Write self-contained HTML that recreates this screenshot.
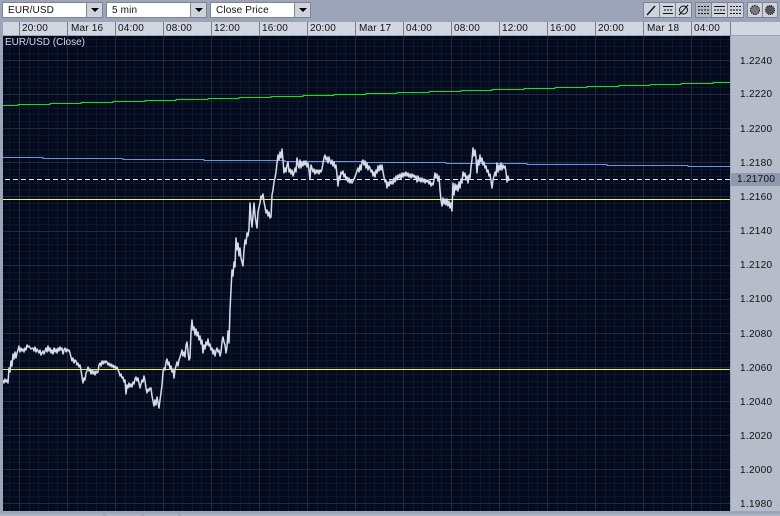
<!DOCTYPE html>
<html><head><meta charset="utf-8"><style>
html,body{margin:0;padding:0}
body{width:780px;height:516px;overflow:hidden;background:#9ca5b8;position:relative;font:10px "Liberation Sans",sans-serif;color:#111}
.a{position:absolute}
.dd{position:absolute;top:2px;height:14px;width:83px;background:#fff;border:1px solid #7d8595;line-height:15px;letter-spacing:.15px}
.dd span{position:absolute;left:5px;top:0;white-space:nowrap}
.bt{position:absolute;top:2px;width:15px;height:14px;background:#cfd3dd;border:1px solid #7d8595}
.bt:after{content:"";position:absolute;left:4px;top:5px;border-left:4px solid transparent;border-right:4px solid transparent;border-top:4px solid #000}
.hd{position:absolute;left:3px;top:22px;width:727px;height:13px;background:#d2d6e0}
.t{position:absolute;top:22px;height:13px;line-height:14px;letter-spacing:.2px;white-space:nowrap}
.s{position:absolute;top:22px;width:1px;height:14px;background:#747c8e}
.y{position:absolute;left:740px;line-height:13px;height:13px;white-space:nowrap;letter-spacing:.3px}
</style></head><body>
<div class="dd" style="left:2px"><span>EUR/USD</span></div><div class="bt" style="left:86px"></div>
<div class="dd" style="left:106px"><span>5 min</span></div><div class="bt" style="left:190px"></div>
<div class="dd" style="left:210px"><span>Close Price</span></div><div class="bt" style="left:294px"></div>

<svg class="a" style="left:0;top:0" width="780" height="20" viewBox="0 0 780 20">
<g fill="#cfd3dd" stroke="#7d8595"><rect x="643.5" y="2.5" width="16" height="15"/><rect x="659.5" y="2.5" width="16" height="15"/><rect x="675.5" y="2.5" width="16" height="15"/><rect x="695.5" y="2.5" width="16" height="15" fill="#b3b8c5"/><rect x="711.5" y="2.5" width="16" height="15"/><rect x="727.5" y="2.5" width="16" height="15"/><rect x="747.5" y="2.5" width="15" height="15"/><rect x="762.5" y="2.5" width="15" height="15"/></g>
<g fill="none" stroke="#111" stroke-width="1"><path d="M647 15L655 6" stroke-width="1.4"/><path d="M663 6.500h10M663 13.500h10" /><path d="M664 10h8" stroke-dasharray="2 1"/><circle cx="683.500" cy="10" r="4"/><path d="M679 15L688 5"/>
<path d="M698 6.500h11M698 13.500h11M698 10h11" stroke-dasharray="2 1"/><path d="M714 6.500h11M714 13.500h11"/><path d="M714 10h11" stroke-dasharray="2 1"/><path d="M730 6.500h11M730 13.500h11M730 10h11" stroke-dasharray="2 1"/></g>
<circle cx="755" cy="10" r="4.500" fill="#777" stroke="#111" stroke-dasharray="1.500 1"/><circle cx="770" cy="10" r="4.500" fill="#555" stroke="#111" stroke-dasharray="1 1"/>
</svg>

<div class="hd"></div>
<div class="a" style="left:731px;top:22px;width:49px;height:13px;background:#d2d6e0"></div>
<div class="s" style="left:19px"></div><div class="s" style="left:67px"></div><div class="s" style="left:115px"></div><div class="s" style="left:163px"></div><div class="s" style="left:211px"></div><div class="s" style="left:259px"></div><div class="s" style="left:307px"></div><div class="s" style="left:355px"></div><div class="s" style="left:403px"></div><div class="s" style="left:451px"></div><div class="s" style="left:499px"></div><div class="s" style="left:547px"></div><div class="s" style="left:595px"></div><div class="s" style="left:643px"></div><div class="s" style="left:691px"></div><div class="s" style="left:730px"></div>
<div class="t" style="left:22px">20:00</div><div class="t" style="left:71px">Mar 16</div><div class="t" style="left:118px">04:00</div><div class="t" style="left:166px">08:00</div><div class="t" style="left:214px">12:00</div><div class="t" style="left:262px">16:00</div><div class="t" style="left:310px">20:00</div><div class="t" style="left:359px">Mar 17</div><div class="t" style="left:406px">04:00</div><div class="t" style="left:454px">08:00</div><div class="t" style="left:502px">12:00</div><div class="t" style="left:550px">16:00</div><div class="t" style="left:598px">20:00</div><div class="t" style="left:647px">Mar 18</div><div class="t" style="left:694px">04:00</div>

<div class="a" style="left:731px;top:36px;width:49px;height:475px;background:#b7bcca"></div>
<div class="y" style="top:55px">1.2240</div><div class="y" style="top:88px">1.2220</div><div class="y" style="top:123px">1.2200</div><div class="y" style="top:157px">1.2180</div><div class="y" style="top:191px">1.2160</div><div class="y" style="top:225px">1.2140</div><div class="y" style="top:259px">1.2120</div><div class="y" style="top:293px">1.2100</div><div class="y" style="top:328px">1.2080</div><div class="y" style="top:362px">1.2060</div><div class="y" style="top:396px">1.2040</div><div class="y" style="top:430px">1.2020</div><div class="y" style="top:464px">1.2000</div><div class="y" style="top:498px">1.1980</div>
<div class="a" style="left:731px;top:173px;width:49px;height:13px;background:#8f9ab1"></div>
<div class="y" style="top:173px;left:737px;">1.21700</div>
<div class="a" style="left:0;top:514px;width:103px;height:2px;background:#aeb4c3"></div>
<div class="a" style="left:106px;top:514px;width:35px;height:2px;background:#aeb4c3"></div>
<div class="a" style="left:144px;top:514px;width:34px;height:2px;background:#aeb4c3"></div>
<div class="a" style="left:181px;top:514px;width:599px;height:2px;background:#aeb4c3"></div>

<svg class="a" style="left:3px;top:36px" width="727" height="475" viewBox="3 36 727 475">
<rect x="3" y="36" width="727" height="475" fill="#050b1f"/>
<g shape-rendering="crispEdges" fill="none">
<path stroke="#0f172b" d="M9.500 36V511M29.500 36V511M38.500 36V511M48.500 36V511M57.500 36V511M77.500 36V511M86.500 36V511M96.500 36V511M105.500 36V511M125.500 36V511M134.500 36V511M144.500 36V511M153.500 36V511M173.500 36V511M182.500 36V511M192.500 36V511M201.500 36V511M221.500 36V511M230.500 36V511M240.500 36V511M249.500 36V511M269.500 36V511M278.500 36V511M288.500 36V511M297.500 36V511M317.500 36V511M326.500 36V511M336.500 36V511M345.500 36V511M365.500 36V511M374.500 36V511M384.500 36V511M393.500 36V511M413.500 36V511M422.500 36V511M432.500 36V511M441.500 36V511M461.500 36V511M470.500 36V511M480.500 36V511M489.500 36V511M509.500 36V511M518.500 36V511M528.500 36V511M537.500 36V511M557.500 36V511M566.500 36V511M576.500 36V511M585.500 36V511M605.500 36V511M614.500 36V511M624.500 36V511M633.500 36V511M653.500 36V511M662.500 36V511M672.500 36V511M681.500 36V511M701.500 36V511M710.500 36V511M720.500 36V511
M3 39.500H730M3 46.500H730M3 53.500H730M3 67.500H730M3 74.500H730M3 81.500H730M3 87.500H730M3 101.500H730M3 108.500H730M3 114.500H730M3 121.500H730M3 135.500H730M3 142.500H730M3 149.500H730M3 155.500H730M3 169.500H730M3 176.500H730M3 183.500H730M3 189.500H730M3 203.500H730M3 210.500H730M3 217.500H730M3 224.500H730M3 238.500H730M3 244.500H730M3 251.500H730M3 258.500H730M3 272.500H730M3 279.500H730M3 285.500H730M3 292.500H730M3 306.500H730M3 313.500H730M3 319.500H730M3 326.500H730M3 340.500H730M3 347.500H730M3 353.500H730M3 360.500H730M3 374.500H730M3 381.500H730M3 387.500H730M3 394.500H730M3 408.500H730M3 415.500H730M3 421.500H730M3 428.500H730M3 442.500H730M3 449.500H730M3 455.500H730M3 462.500H730M3 476.500H730M3 483.500H730M3 490.500H730M3 496.500H730"/>
<path stroke="#222b3e" d="M19.500 36V511M67.500 36V511M115.500 36V511M163.500 36V511M211.500 36V511M259.500 36V511M307.500 36V511M355.500 36V511M403.500 36V511M451.500 36V511M499.500 36V511M547.500 36V511M595.500 36V511M643.500 36V511M691.500 36V511
M3 60.500H730M3 94.500H730M3 128.500H730M3 162.500H730M3 196.500H730M3 231.500H730M3 265.500H730M3 299.500H730M3 333.500H730M3 367.500H730M3 401.500H730M3 435.500H730M3 469.500H730M3 503.500H730"/>
<path stroke="#00ee00" d="M3 105.500H18V104.500H50V103.500H81V102.500H113V101.500H145V100.500H176V99.500H208V98.500H239V97.500H271V96.500H303V95.500H334V94.500H366V93.500H397V92.500H429V91.500H461V90.500H492V89.500H524V88.500H555V87.500H587V86.500H619V85.500H650V84.500H681V83.500H713V82.500H730"/>
<path stroke="#6b95df" d="M3 157.500H43V158.500H123V159.500H204V160.500H285V161.500H366V162.500H446V163.500H527V164.500H607V165.500H688V166.500H730"/>
<path stroke="#e8ecf4" stroke-dasharray="5 3" d="M5 179.500H730"/>
<path stroke="#ffff00" d="M3 199.500H730M3 369.500H730"/>
</g>
<path fill="none" stroke="#d5dbe8" stroke-width="1.500" stroke-linejoin="round" d="M3 380L4 383L5 379L6 382L7 380L8 383L9 368L10 372L11 361L12 366L13 354L14 359L15 352L16 358L17 353L18 350L19 346L20 352L21 348L22 351L23 349L24 352L25 348L26 350L27 345L28 347L29 346L31 349L33 348L34 351L35 347L36 352L37 349L39 353L40 350L41 355L43 351L44 354L46 348L47 352L48 346L49 351L50 348L51 353L52 350L53 354L54 348L55 352L56 349L57 353L58 348L59 351L60 347L61 350L62 348L63 354L64 350L65 348L66 352L67 349L68 351L69 350L70 353L71 357L72 361L73 358L74 363L75 360L76 361L77 365L78 363L79 367L80 365L81 370L82 377L83 383L84 378L85 380L86 373L87 371L88 367L89 371L90 369L91 374L92 370L93 374L94 371L95 375L96 371L97 373L98 372L99 365L100 363L101 366L102 361L103 364L104 361L105 363L106 361L107 362L108 365L109 363L110 366L111 364L112 367L113 365L114 368L115 366L116 369L117 367L118 370L119 372L120 376L121 374L122 378L123 377L124 382L125 380L126 394L127 385L128 388L129 383L130 387L131 384L132 387L133 382L134 384L135 379L136 377L137 381L138 378L139 383L140 388L141 384L142 380L143 382L144 376L145 381L146 388L147 393L148 389L149 391L150 388L151 388L152 396L153 401L154 406L155 400L156 405L157 397L158 402L159 408L160 400L161 393L162 385L163 372L164 368L165 370L166 362L167 359L168 365L169 362L170 369L171 366L172 372L173 369L174 378L175 370L176 366L177 362L178 366L179 360L180 357L181 354L182 350L183 356L184 352L185 357L186 345L187 342L188 352L189 360L190 358L191 332L192 320L193 330L194 327L195 335L196 329L197 336L198 332L199 340L200 336L201 344L202 340L203 353L204 345L205 349L206 342L207 345L208 339L209 346L210 344L211 350L212 348L213 354L214 350L215 356L216 351L217 348L218 352L219 350L220 356L221 352L222 342L223 337L224 342L225 345L226 353L227 347L228 331L229 343L230 310L231 290L232 270L233 276L234 262L235 267L236 238L237 250L238 243L239 256L240 248L241 258L243 266L244 250L245 240L246 244L247 233L248 236L249 229L250 203L251 218L252 227L253 216L254 203L255 215L256 222L257 228L258 212L259 207L260 203L261 196L262 198L263 194L264 202L265 207L266 213L267 210L268 216L269 212L270 218L271 217L272 195L273 190L274 182L275 178L276 172L277 163L278 155L279 160L280 152L281 158L282 149L283 160L284 173L285 168L286 172L287 165L288 162L289 172L290 169L291 174L292 170L293 176L294 173L295 168L296 172L297 158L298 164L299 168L300 160L301 168L302 162L303 166L304 161L305 165L306 161L307 167L308 163L309 170L310 179L311 165L312 168L313 172L314 169L315 174L316 170L317 173L318 170L319 174L320 170L321 172L322 169L323 163L324 158L325 155L326 160L327 157L328 163L329 157L330 161L331 164L332 160L333 166L334 162L335 168L336 165L337 175L338 186L339 176L340 180L341 172L342 174L343 171L344 177L345 174L346 180L347 177L348 182L349 178L350 183L351 180L352 183L354 179L356 174L358 168L359 172L360 165L361 170L362 162L363 160L364 165L365 161L366 168L367 163L368 170L369 166L370 168L371 172L372 170L373 176L374 172L375 177L376 170L377 173L378 166L379 171L380 165L381 170L382 165L383 172L384 177L385 182L386 180L387 188L388 182L389 186L390 181L391 184L392 181L393 184L394 178L395 182L396 176L397 180L398 175L399 178L400 174L401 179L402 173L403 177L404 173L405 176L406 172L407 176L408 173L409 177L410 174L411 178L412 174L413 177L414 175L415 178L416 176L417 182L418 176L419 181L420 178L421 182L422 178L423 182L424 179L425 183L426 180L427 182L428 180L429 184L430 181L431 186L432 183L433 185L434 180L435 173L436 178L437 174L438 181L439 176L440 190L441 200L442 206L443 198L444 204L445 199L446 205L447 199L448 206L449 201L450 208L451 203L452 211L453 183L454 195L455 184L456 190L457 185L458 191L459 182L460 188L461 179L462 183L463 172L464 176L465 173L466 180L467 176L468 183L469 175L470 178L471 167L472 160L473 148L474 156L475 150L476 158L477 173L478 160L479 165L480 155L481 162L482 158L483 165L484 162L485 168L486 166L487 172L488 170L489 176L490 174L491 181L492 188L493 180L494 176L495 172L496 176L497 163L498 172L499 165L500 170L501 163L502 170L503 165L504 168L505 166L506 172L507 182L508 176L509 181"/>
</svg>

<div class="a" style="left:5px;top:36px;color:#d5dae6;line-height:13px">EUR/USD (Close)</div>
</body></html>
